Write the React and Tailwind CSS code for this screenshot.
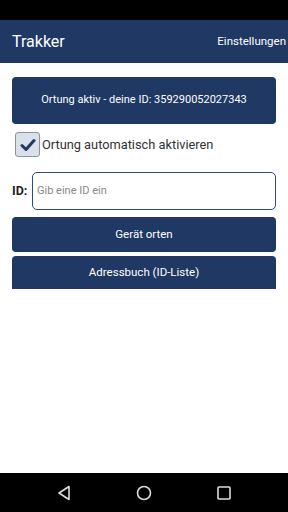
export default function App() {
  return (
    <div className="w-[288px] h-[512px] flex flex-col bg-white overflow-hidden" style={{ fontFamily: "Roboto, 'Noto Sans', sans-serif" }}>
      <div className="h-[20px] bg-black shrink-0" />
      <div className="h-[43px] bg-[#1f3864] shrink-0 flex items-center justify-between pl-[12px] pr-[2px]">
        <span className="text-white text-[16px] leading-none">Trakker</span>
        <span className="text-white text-[11.5px] leading-none">Einstellungen</span>
      </div>
      <div className="flex-1 flex flex-col px-[12px] pt-[14px]">
        <div className="h-[47px] rounded-[4px] bg-[#1f3864] flex items-center justify-center text-white text-[11px]">
          Ortung aktiv - deine ID: 359290052027343
        </div>
        <div className="flex items-center mt-[8px] h-[25px] pl-[3px]">
          <div className="w-[25px] h-[25px] rounded-[3px] bg-[#dbe1ea] border border-[#8b94a3] flex items-center justify-center">
            <svg width="16" height="14" viewBox="0 0 16 14">
              <path d="M2 7.5 L6 11.5 L14 2.5" fill="none" stroke="#1f3864" strokeWidth="3" strokeLinecap="round" strokeLinejoin="round" />
            </svg>
          </div>
          <span className="ml-[2px] text-[12.8px] text-[#333]">Ortung automatisch aktivieren</span>
        </div>
        <div className="flex items-center mt-[15px] h-[38px]">
          <span className="text-[12.5px] font-bold text-[#222] w-[20px]">ID:</span>
          <div className="flex-1 h-full rounded-[5px] border-[1.5px] border-[#2c4a80] flex items-center pl-[4px] text-[11px] text-[#888]">
            Gib eine ID ein
          </div>
        </div>
        <div className="mt-[7px] h-[35px] rounded-[4px] bg-[#1f3864] flex items-center justify-center text-white text-[11.5px]">
          Gerät orten
        </div>
        <div className="mt-[4px] h-[33px] rounded-t-[4px] bg-[#1f3864] flex items-center justify-center text-white text-[11.5px]">
          Adressbuch (ID-Liste)
        </div>
      </div>
      <div className="h-[39px] bg-black shrink-0 flex items-center justify-center gap-[64px]">
        <svg width="16" height="16" viewBox="0 0 16 16">
          <path d="M13 1.5 L3 8 L13 14.5 Z" fill="none" stroke="#ddd" strokeWidth="1.6" strokeLinejoin="round" />
        </svg>
        <svg width="16" height="16" viewBox="0 0 16 16">
          <circle cx="8" cy="8" r="6.5" fill="none" stroke="#ddd" strokeWidth="1.6" />
        </svg>
        <svg width="16" height="16" viewBox="0 0 16 16">
          <rect x="2" y="2" width="12" height="12" rx="1" fill="none" stroke="#ddd" strokeWidth="1.6" />
        </svg>
      </div>
    </div>
  );
}
